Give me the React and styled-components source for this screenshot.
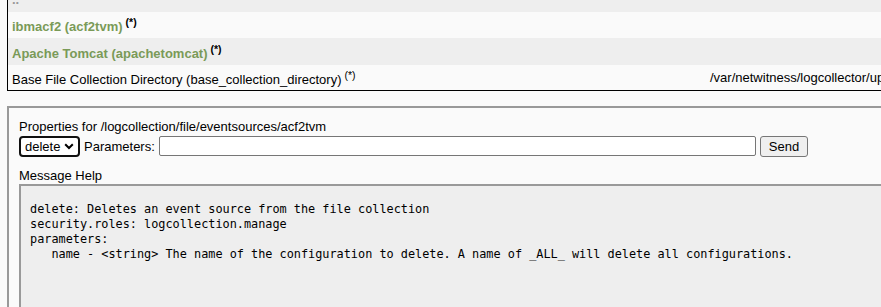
import React from "react";
import styled, { createGlobalStyle } from "styled-components";

const GlobalStyle = createGlobalStyle`
  html, body {
    margin: 0;
    background: #fafafa;
    overflow: hidden;
    font-family: "Liberation Sans", Arial, sans-serif;
  }
`;

const Page = styled.div`
  padding-left: 7px;
  width: 1300px;
`;

const SourceList = styled.div`
  height: 90px;
  overflow: hidden;
  border-left: 1px solid #000;
  border-bottom: 1px solid #000;
`;

const Rows = styled.div`
  margin-top: -14px;
`;

const Row = styled.div`
  display: grid;
  grid-template-columns: 698px 1fr;
  align-items: center;
  height: ${(p) => p.$h || 26}px;
  padding-left: 4px;
  background: ${(p) => (p.$alt ? "#eeeeee" : "#fafafa")};
  font-size: 13px;
  color: #000;
`;

const Link = styled.span`
  color: ${(p) => (p.$parent ? "#999" : "#7a9a58")};
  font-weight: bold;
`;

const Req = styled.sup`
  font-size: 10.5px;
  color: #000;
  font-weight: ${(p) => (p.$bold ? "bold" : "normal")};
  margin-left: 3px;
  vertical-align: 5px;
`;

const Value = styled.span`
  white-space: nowrap;
`;

const Properties = styled.div`
  margin-top: 15px;
  border-top: 2px solid #999;
  border-left: 2px solid #999;
  padding: 11px 0 0 10px;
  height: 200px;
  font-size: 13px;
  color: #000;
`;

const Line = styled.div`
  line-height: 15px;
`;

const Form = styled.form`
  display: flex;
  align-items: center;
  gap: 4px;
  height: 22px;
  margin-top: 1px;
`;

const SelectWrap = styled.span`
  position: relative;
  display: inline-flex;
`;

const Select = styled.select`
  appearance: none;
  font: 13px "Liberation Sans", Arial, sans-serif;
  height: 21px;
  width: 61px;
  border: 2px solid #101010;
  border-radius: 4px;
  background: #fff;
  padding: 0 0 0 4px;
  color: #000;
`;

const Chevron = styled.svg`
  position: absolute;
  right: 6px;
  top: 7px;
  pointer-events: none;
`;

const Input = styled.input`
  width: 597px;
  height: 20px;
  box-sizing: border-box;
  border: 1px solid #767676;
  border-radius: 2px;
  background: #fff;
`;

const Button = styled.button`
  height: 21px;
  padding: 0 8px;
  font: 13px "Liberation Sans", Arial, sans-serif;
  background: #efefef;
  border: 1px solid #767676;
  border-radius: 3px;
  color: #000;
`;

const HelpTitle = styled.div`
  margin-top: 11px;
  line-height: 15px;
`;

const Help = styled.pre`
  margin: 1px 0 0;
  height: 160px;
  border-top: 2px solid #999;
  border-left: 2px solid #999;
  background: #eeeeee;
  padding: 16px 9px;
  font-family: "DejaVu Sans Mono", "Liberation Mono", monospace;
  font-size: 11.85px;
  line-height: 15px;
  color: #000;
`;

const help = `delete: Deletes an event source from the file collection
security.roles: logcollection.manage
parameters:
   name - <string> The name of the configuration to delete. A name of _ALL_ will delete all configurations.`;

export default function App() {
  return (
    <Page>
      <GlobalStyle />
      <SourceList>
        <Rows>
          <Row $alt>
            <Link $parent>..</Link>
          </Row>
          <Row>
            <span>
              <Link>ibmacf2 (acf2tvm)</Link>
              <Req $bold>(*)</Req>
            </span>
          </Row>
          <Row $alt $h={27}>
            <span>
              <Link>Apache Tomcat (apachetomcat)</Link>
              <Req $bold>(*)</Req>
            </span>
          </Row>
          <Row $h={25}>
            <span>
              Base File Collection Directory (base_collection_directory)
              <Req>(*)</Req>
            </span>
            <Value>/var/netwitness/logcollector/upload</Value>
          </Row>
        </Rows>
      </SourceList>
      <Properties>
        <Line>Properties for /logcollection/file/eventsources/acf2tvm</Line>
        <Form onSubmit={(e) => e.preventDefault()}>
          <SelectWrap>
            <Select defaultValue="delete">
              <option value="delete">delete</option>
            </Select>
            <Chevron width="10" height="7" viewBox="0 0 10 7">
              <path d="M1.2 1.2 L5 5 L8.8 1.2" fill="none" stroke="#000" strokeWidth="2" />
            </Chevron>
          </SelectWrap>
          <span>Parameters:</span>
          <Input type="text" />
          <Button type="submit">Send</Button>
        </Form>
        <HelpTitle>Message Help</HelpTitle>
        <Help>{help}</Help>
      </Properties>
    </Page>
  );
}
